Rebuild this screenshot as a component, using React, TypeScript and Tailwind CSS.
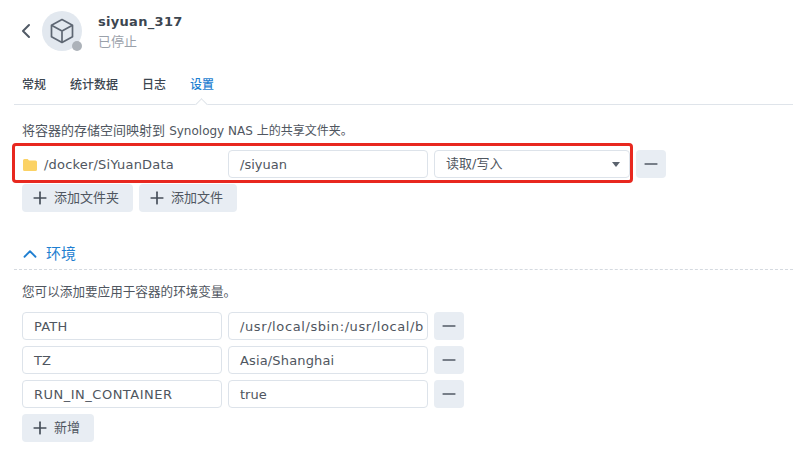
import { ChevronLeft, ChevronUp, Minus, Plus } from 'lucide-react'

const FONT = "font-['DejaVu_Sans','Noto_Sans_CJK_SC',sans-serif]"

function Field({ value, tracking = '' }: { value: string; tracking?: string }) {
  return (
    <div className={`${tracking} flex h-7 w-[200px] shrink-0 items-center overflow-hidden whitespace-nowrap rounded-[4px] border border-[#dde3ea] bg-white px-[11px] pt-px text-[13px] text-[#4f5660]`}>
      {value}
    </div>
  )
}

function MinusButton() {
  return (
    <button className="flex h-7 w-[30px] shrink-0 items-center justify-center rounded-[4px] bg-[#e8edf3] text-[#525a66]">
      <Minus size={20} strokeWidth={2} />
    </button>
  )
}

function AddButton({ label }: { label: string }) {
  return (
    <button className="flex h-7 items-center gap-[4px] rounded-[4px] bg-[#e8edf3] pl-[8px] pr-[14px] text-[13px] text-[#4f5660]">
      <Plus size={20} strokeWidth={2} className="text-[#454d58]" />
      {label}
    </button>
  )
}

function EnvRow({ name, value, nameTracking, valueTracking }: { name: string; value: string; nameTracking?: string; valueTracking?: string }) {
  return (
    <div className="flex gap-[6px]">
      <Field value={name} tracking={nameTracking} />
      <Field value={value} tracking={valueTracking} />
      <MinusButton />
    </div>
  )
}

export default function App() {
  return (
    <div className={`${FONT} h-[456px] w-[793px] overflow-hidden bg-white`}>
      {/* header */}
      <div className="flex h-[61px] items-start pl-[14px] pt-[11px]">
        <ChevronLeft size={24} strokeWidth={2} className="mt-[8px] text-[#515a66]" />
        <div className="relative ml-[4px] flex h-10 w-10 items-center justify-center rounded-full bg-[#e2e8ef]">
          <svg width="24" height="26" viewBox="0 0 24 26" fill="none" stroke="#5e6773" strokeWidth="1.7" strokeLinejoin="round">
            <path d="M12 1.5 22.5 7.2v11.6L12 24.5 1.5 18.8V7.2Z" />
            <path d="M1.5 7.2 12 13l10.5-5.8M12 13v11.5" />
          </svg>
          <span className="absolute bottom-0 right-0 h-[10px] w-[10px] rounded-full bg-[#acb2b9]" />
        </div>
        <div className="ml-4 mt-px flex flex-col">
          <div className="text-[13px] leading-[20px] font-bold tracking-[0.3px] text-[#3c4650]">siyuan_317</div>
          <div className="text-[13px] leading-[20px] text-[#9aa1aa]">已停止</div>
        </div>
      </div>

      {/* tabs */}
      <div className="relative ml-[14px] flex h-[44px] items-center gap-6 border-b border-[#dfe4ea] pl-2 pt-[5px] text-[12px]">
        <span className="font-medium text-[#3c4650]">常规</span>
        <span className="font-medium text-[#3c4650]">统计数据</span>
        <span className="font-medium text-[#3c4650]">日志</span>
        <span className="font-medium text-[#1f7fd1]">设置</span>
        <span className="absolute bottom-[-5px] left-[183px] h-[9px] w-[9px] rotate-45 border-l border-t border-[#dfe4ea] bg-white" />
      </div>

      {/* volumes */}
      <div className="px-[22px]">
        <p className="mt-[17px] whitespace-nowrap text-[13px] leading-[18px] text-[#4f5660]">
          将容器的存储空间映射到 <span className="text-[12px]">Synology NAS 上的共享文件夹。</span>
        </p>
        <div className="relative mt-[10px] flex gap-[6px]">
          <div className="flex h-7 w-[200px] shrink-0 items-center gap-[7px] pt-px text-[13px] tracking-[0.2px] text-[#4f5660]">
            <svg width="14" height="12" viewBox="0 0 14 12" className="ml-px shrink-0">
              <path d="M0 1.5A1.5 1.5 0 0 1 1.5 0h3.2L6 1.5h6.5A1.5 1.5 0 0 1 14 3v7.5a1.5 1.5 0 0 1-1.5 1.5h-11A1.5 1.5 0 0 1 0 10.5Z" fill="#fbd265" />
            </svg>
            /docker/SiYuanData
          </div>
          <Field value="/siyuan" />
          <div className="flex h-7 w-[196px] shrink-0 items-center justify-between rounded-[4px] border border-[#dde3ea] bg-white pl-[11px] pr-[9px] text-[13px] text-[#4f5660]">
            读取/写入
            <span className="h-0 w-0 border-x-[4px] border-t-[5px] border-x-transparent border-t-[#5b636e]" />
          </div>
          <MinusButton />
          {/* highlight drawn over the screenshot */}
          <div className="pointer-events-none absolute left-[-10px] top-[-7px] h-[40px] w-[621px] rounded-[4px] border-[3px] border-[#e8281f]" />
        </div>
        <div className="mt-[6px] flex gap-[6px]">
          <AddButton label="添加文件夹" />
          <AddButton label="添加文件" />
        </div>

        {/* environment */}
        <div className="ml-[-8px] mr-[-22px] mt-[29px] flex h-[29px] items-center border-b border-dashed border-[#d5dae0] pb-[2px] pl-[5px] text-[15px] text-[#1f7fd1]">
          <ChevronUp size={22} strokeWidth={2} />
          <span className="ml-[5px]">环境</span>
        </div>
        <p className="mt-[13px] whitespace-nowrap text-[12.6px] leading-[18px] text-[#4f5660]">您可以添加要应用于容器的环境变量。</p>
        <div className="mt-[11px] flex flex-col gap-[6px]">
          <EnvRow name="PATH" value="/usr/local/sbin:/usr/local/b" nameTracking="tracking-[0.2px]" valueTracking="tracking-[0.6px]" />
          <EnvRow name="TZ" value="Asia/Shanghai" valueTracking="tracking-[0.15px]" />
          <EnvRow name="RUN_IN_CONTAINER" value="true" nameTracking="tracking-[0.5px]" />
        </div>
        <div className="mt-[6px] flex">
          <AddButton label="新增" />
        </div>
      </div>
    </div>
  )
}
